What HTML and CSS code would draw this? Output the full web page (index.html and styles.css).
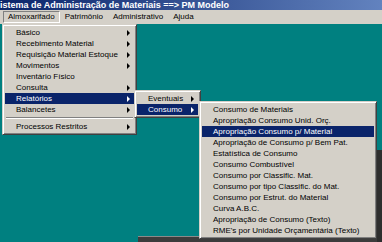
FILE: index.html
```html
<!DOCTYPE html>
<html lang="pt">
<head>
    <meta charset="UTF-8">
    <title>Sistema de Administração de Materiais</title>
    <link rel="stylesheet" href="styles.css">
</head>
<body>
    <div class="titlebar">
        <span class="title-text">istema de Administração de Materiais ==&gt; PM Modelo</span>
    </div>
    <div class="menubar">
        <span class="top open">Almoxarifado</span>
        <span class="top">Patrimônio</span>
        <span class="top">Administrativo</span>
        <span class="top">Ajuda</span>
    </div>
    <div class="desktop">
        <div class="behind"></div>
        <div class="behind-side"></div>

        <ul class="menu menu-main">
            <li class="sub">Básico</li>
            <li class="sub">Recebimento Material</li>
            <li class="sub">Requisição Material Estoque</li>
            <li class="sub">Movimentos</li>
            <li>Inventário Físico</li>
            <li class="sub">Consulta</li>
            <li class="sub active">Relatórios</li>
            <li class="sub">Balancetes</li>
            <li class="sep"></li>
            <li class="sub">Processos Restritos</li>
        </ul>

        <ul class="menu menu-rel">
            <li class="sub">Eventuais</li>
            <li class="sub active">Consumo</li>
        </ul>

        <ul class="menu menu-cons">
            <li>Consumo de Materiais</li>
            <li>Apropriação Consumo Unid. Orç.</li>
            <li class="active">Apropriação Consumo p/ Material</li>
            <li>Apropriação de Consumo p/ Bem Pat.</li>
            <li>Estatística de Consumo</li>
            <li>Consumo Combustível</li>
            <li>Consumo por Classific. Mat.</li>
            <li>Consumo por tipo Classific. do Mat.</li>
            <li>Consumo por Estrut. do Material</li>
            <li>Curva A.B.C.</li>
            <li>Apropriação de Consumo (Texto)</li>
            <li>RME's por Unidade Orçamentária (Texto)</li>
        </ul>
    </div>
</body>
</html>
```

FILE: styles.css
```css
body {
    margin: 0;
    width: 382px;
    height: 242px;
    overflow: hidden;
    background-color: #008080;
    font-family: "Liberation Sans", Arial, sans-serif;
    font-size: 8px;
    color: #000;
}
.titlebar {
    height: 10px;
    background: linear-gradient(to right, #0a246a, #7d9fd8 130%);
    color: #fff;
    font-weight: bold;
    font-size: 9px;
    line-height: 10px;
    white-space: nowrap;
    overflow: hidden;
}
.menubar {
    height: 14px;
    display: flex;
    align-items: center;
    padding-left: 3px;
    background-color: #d4d0c8;
}
.menubar .top {
    padding: 0 4px;
    line-height: 10px;
    border: 1px solid transparent;
}
.menubar .open {
    border-color: #808080 #fff #fff #808080;
}
.desktop {
    position: relative;
    height: 218px;
}
.menu {
    position: absolute;
    box-sizing: border-box;
    margin: 0;
    padding: 2px;
    list-style: none;
    background-color: #d4d0c8;
    border: 1px solid;
    border-color: #d4d0c8 #404040 #404040 #d4d0c8;
    box-shadow: inset 1px 1px #fff, inset -1px -1px #808080;
}
.menu li {
    position: relative;
    height: 11px;
    line-height: 11px;
    padding: 0 14px 0 11px;
    white-space: nowrap;
}
.menu li.sub::after {
    content: "";
    position: absolute;
    right: 4px;
    top: 3px;
    border-left: 3px solid #000;
    border-top: 3px solid transparent;
    border-bottom: 3px solid transparent;
}
.menu li.active {
    background-color: #0a246a;
    color: #fff;
}
.menu li.active::after {
    border-left-color: #fff;
}
.menu li.sep {
    height: 6px;
}
.menu li.sep::before {
    content: "";
    position: absolute;
    left: 1px;
    right: 1px;
    top: 2px;
    border-top: 1px solid #808080;
    border-bottom: 1px solid #fff;
}
.menu-main {
    left: 2px;
    top: 0;
    width: 135px;
}
.menu-rel {
    left: 134px;
    top: 66px;
    width: 67px;
}
.menu-cons {
    left: 199px;
    top: 77px;
    width: 178px;
}
.behind {
    position: absolute;
    left: 138px;
    right: 0;
    bottom: 0;
    height: 5px;
    background-color: #3c3c3c;
    border-top: 1px solid #8a8a8a;
}
.behind-side {
    position: absolute;
    right: 0;
    top: 126px;
    bottom: 0;
    width: 5px;
    background-color: #2e2e2e;
}
```
